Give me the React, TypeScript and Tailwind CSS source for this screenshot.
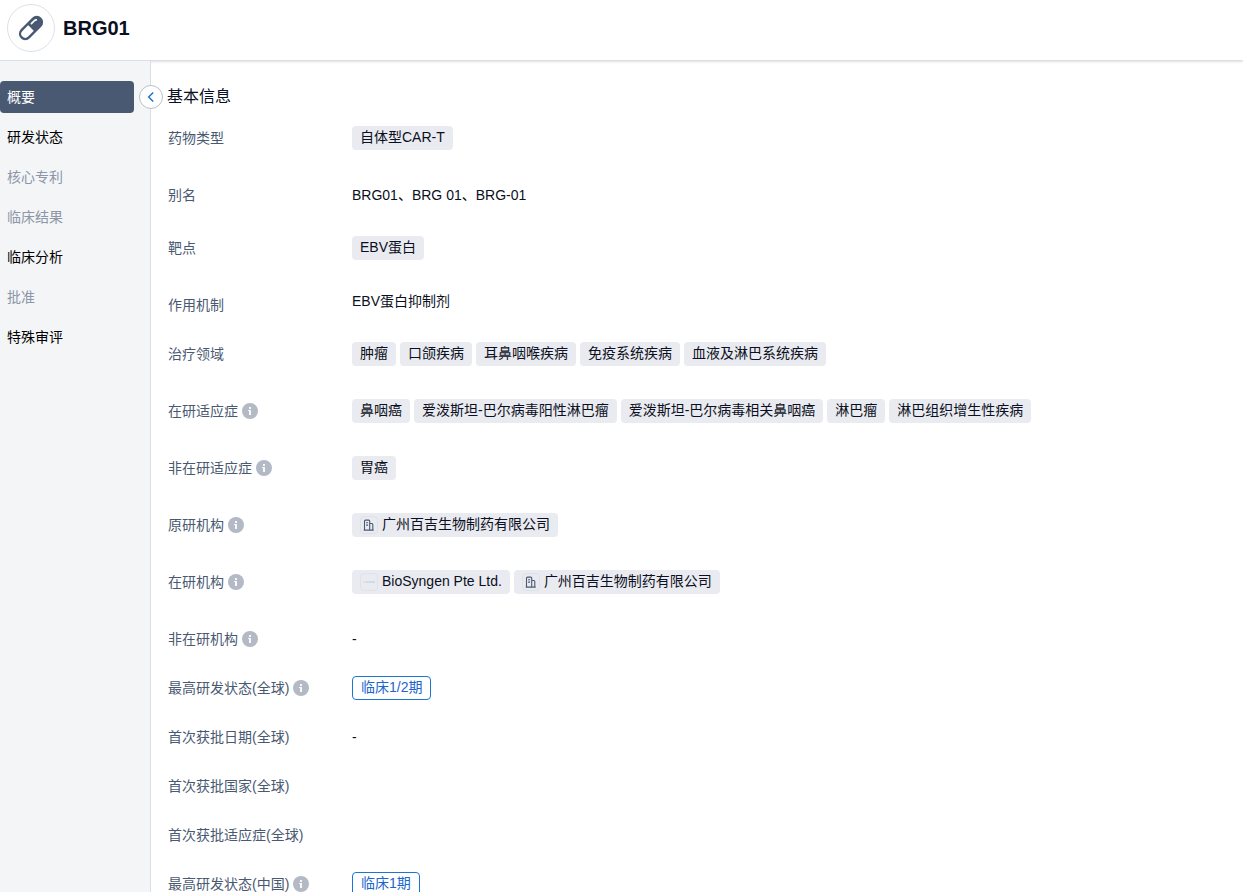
import type { ReactNode } from "react";
import clsx from "clsx";

type Tag = { text: string; icon?: "org" | "logo" };

type Row = {
  label: string;
  info?: boolean;
  tags?: Tag[];
  text?: string;
  mechanism?: string;
  status?: string;
};

const NAV_ITEMS = [
  { label: "概要", active: true },
  { label: "研发状态" },
  { label: "核心专利", disabled: true },
  { label: "临床结果", disabled: true },
  { label: "临床分析" },
  { label: "批准", disabled: true },
  { label: "特殊审评" },
];

const ROWS: Row[] = [
  { label: "药物类型", tags: [{ text: "自体型CAR-T" }] },
  { label: "别名", text: "BRG01、BRG 01、BRG-01" },
  { label: "靶点", tags: [{ text: "EBV蛋白" }] },
  { label: "作用机制", mechanism: "EBV蛋白抑制剂" },
  {
    label: "治疗领域",
    tags: [
      { text: "肿瘤" },
      { text: "口颌疾病" },
      { text: "耳鼻咽喉疾病" },
      { text: "免疫系统疾病" },
      { text: "血液及淋巴系统疾病" },
    ],
  },
  {
    label: "在研适应症",
    info: true,
    tags: [
      { text: "鼻咽癌" },
      { text: "爱泼斯坦-巴尔病毒阳性淋巴瘤" },
      { text: "爱泼斯坦-巴尔病毒相关鼻咽癌" },
      { text: "淋巴瘤" },
      { text: "淋巴组织增生性疾病" },
    ],
  },
  { label: "非在研适应症", info: true, tags: [{ text: "胃癌" }] },
  { label: "原研机构", info: true, tags: [{ text: "广州百吉生物制药有限公司", icon: "org" }] },
  {
    label: "在研机构",
    info: true,
    tags: [
      { text: "BioSyngen Pte Ltd.", icon: "logo" },
      { text: "广州百吉生物制药有限公司", icon: "org" },
    ],
  },
  { label: "非在研机构", info: true, text: "-" },
  { label: "最高研发状态(全球)", info: true, status: "临床1/2期" },
  { label: "首次获批日期(全球)", text: "-" },
  { label: "首次获批国家(全球)" },
  { label: "首次获批适应症(全球)" },
  { label: "最高研发状态(中国)", info: true, status: "临床1期" },
];

export default function App() {
  return (
    <div className="flex h-screen flex-col overflow-hidden bg-white font-['Liberation_Sans','Noto_Sans_CJK_SC',sans-serif] text-sm text-[#0a1022]">
      <header className="relative z-10 flex h-[61px] shrink-0 items-center gap-2 border-b border-[#dcdfe5] bg-white px-[7px] pb-1 shadow-[0_1px_2px_rgba(0,0,0,0.12)]">
        <span className="flex size-12 items-center justify-center rounded-full border border-[#dfe1e8]">
          <PillIcon />
        </span>
        <h1 className="text-xl font-bold">BRG01</h1>
      </header>

      <div className="flex min-h-0 flex-1">
        {/* Sits above the header shadow so only the content pane gets it */}
        <aside className="relative z-20 w-[151px] shrink-0 border-r border-[#dcdfe6] bg-[#f3f5f7] pt-5">
          <nav className="flex flex-col gap-2 pr-4">
            {NAV_ITEMS.map((item) => (
              <button
                key={item.label}
                disabled={item.disabled}
                className={clsx(
                  "h-8 rounded-sm px-[7px] text-left leading-8",
                  item.active && "bg-[#4a5972] text-white",
                  item.disabled && "text-[#8c96a7]",
                  !item.active && !item.disabled && "text-black",
                )}
              >
                {item.label}
              </button>
            ))}
          </nav>
          <button
            aria-label="收起"
            className="absolute top-6 -right-[13px] flex size-6 items-center justify-center rounded-full border border-[#b9bfcb] bg-white"
          >
            <svg viewBox="0 0 12 12" className="size-3" fill="none" stroke="#1976d2" strokeWidth="1.5">
              <path d="M8.2 1.5 3.7 6l4.5 4.5" />
            </svg>
          </button>
        </aside>

        <main className="min-w-0 flex-1 overflow-hidden px-4 pt-6">
          <h2 className="text-base leading-6">基本信息</h2>
          <dl className="mt-[17px] pl-px">
            {ROWS.map((row) => (
              <InfoRow key={row.label} row={row} />
            ))}
          </dl>
        </main>
      </div>
    </div>
  );
}

function InfoRow({ row }: { row: Row }) {
  return (
    <div className="flex pb-[25px]">
      <dt className="flex h-6 w-[184px] shrink-0 items-center gap-1 text-[#4a5972]">
        {row.label}
        {row.info && <InfoIcon />}
      </dt>
      <dd className="min-w-0 flex-1">
        {row.tags && (
          <div className="flex flex-wrap gap-x-1">
            {row.tags.map((tag) => (
              <TagPill key={tag.text} tag={tag} />
            ))}
          </div>
        )}
        {row.text && <p className={clsx("leading-6", row.text !== "-" && "mb-1")}>{row.text}</p>}
        {row.mechanism && <p className="leading-4">{row.mechanism}</p>}
        {row.status && (
          <span className="inline-flex h-6 items-center rounded-sm border border-[#1976d2] px-2 pb-0.5 align-top text-[#1a66cc]">
            {row.status}
          </span>
        )}
      </dd>
    </div>
  );
}

function TagPill({ tag }: { tag: Tag }) {
  return (
    <span className="mb-2 flex h-6 items-center gap-1 rounded-sm bg-[#eaebf0] px-2">
      {tag.icon && (
        <IconBox>{tag.icon === "org" ? <BuildingIcon /> : <BioLogo />}</IconBox>
      )}
      <span className="pb-0.5 leading-5">{tag.text}</span>
    </span>
  );
}

function IconBox({ children }: { children: ReactNode }) {
  return (
    <span className="flex size-[18px] items-center justify-center rounded-sm border border-[#dfe2e8]">
      {children}
    </span>
  );
}

function PillIcon() {
  return (
    <svg viewBox="0 0 26 26" className="size-[26px] overflow-visible" fill="none">
      <g transform="rotate(45 13 13)">
        <rect x="7.8" y="-.3" width="10.4" height="26.6" rx="5.2" stroke="#4a5972" strokeWidth="2.4" />
        <path d="M7.8 13V4.9a5.2 5.2 0 0 1 10.4 0V13z" fill="#4a5972" />
        <path d="M10.2 9.6V5.4a2.6 2.6 0 0 1 .8-1.9" stroke="#fff" strokeWidth="1.6" strokeLinecap="round" />
      </g>
    </svg>
  );
}

function InfoIcon() {
  return (
    <svg viewBox="0 0 16 16" className="size-4 shrink-0">
      <circle cx="8" cy="8" r="8" fill="#b3b9c5" />
      <path d="M7 4h2v2H7zM6 7h3v5H7V8H6z" fill="#fff" fillOpacity=".9" />
    </svg>
  );
}

function BuildingIcon() {
  return (
    <svg viewBox="0 0 12 12" className="size-3" fill="none" stroke="#4a5972" strokeWidth="1.1">
      <path d="M1.5 11V2.1q0-1 1-1h3.2q1 0 1 1V11M6.7 4.5h2.1q1 0 1 1V11M.7 11.1h10" />
      <path d="M3.1 3.7h2M3.1 6.1h2" />
    </svg>
  );
}

function BioLogo() {
  return (
    <svg viewBox="0 0 12 4" className="h-1 w-3">
      <path d="M0 1.4 1.2 2.6 2.6 1.4" stroke="#f0c48c" strokeWidth=".8" fill="none" />
      <path d="M3 2h4" stroke="#a9d9c6" strokeWidth="1" />
      <path d="M7 2h5" stroke="#a8cfe6" strokeWidth="1" />
    </svg>
  );
}
